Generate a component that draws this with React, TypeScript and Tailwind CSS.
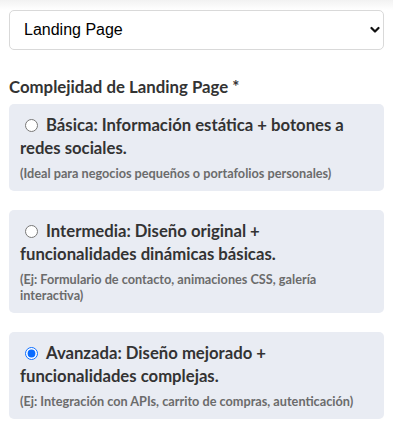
import React, { useState } from 'react';

const options = [
  {
    id: 'basica',
    title: 'Básica: Información estática + botones a redes sociales.',
    note: '(Ideal para negocios pequeños o portafolios personales)',
  },
  {
    id: 'intermedia',
    title: 'Intermedia: Diseño original + funcionalidades dinámicas básicas.',
    note: '(Ej: Formulario de contacto, animaciones CSS, galería interactiva)',
  },
  {
    id: 'avanzada',
    title: 'Avanzada: Diseño mejorado + funcionalidades complejas.',
    note: '(Ej: Integración con APIs, carrito de compras, autenticación)',
  },
];

export default function App() {
  const [level, setLevel] = useState('avanzada');

  return (
    <div className="w-[393px] h-[443px] bg-white overflow-hidden font-['Lato','Noto_Sans',sans-serif] text-[#333]">
      <div className="h-[10px] bg-gradient-to-b from-[#f2f2f2] to-white" />
      <div className="px-[9px]">
        {/* selector de tipo de proyecto */}
        <div className="relative">
          <select
            defaultValue="landing"
            className="w-full h-[40px] appearance-none rounded-[5px] border border-[#d9d9d9] bg-white pl-[14px] pr-8 font-['Liberation_Sans',Arial,sans-serif] text-[16px] text-black outline-none"
          >
            <option value="landing">Landing Page</option>
            <option value="web">Sitio Web</option>
            <option value="tienda">Tienda en línea</option>
          </select>
          <svg
            className="pointer-events-none absolute right-[4px] top-[16px] w-[10px] h-[8px]"
            viewBox="0 0 10 8"
            fill="none"
            stroke="#111"
            strokeWidth="2.2"
            strokeLinecap="round"
            strokeLinejoin="round"
          >
            <path d="M1.5 2 L5 5.5 L8.5 2" />
          </svg>
        </div>

        <div className="mt-[28px] text-[16.8px] font-bold leading-[18px] text-[#333]">
          Complejidad de Landing Page *
        </div>

        <div className="mt-[8px] flex flex-col gap-[19px]">
          {options.map((o) => (
            <label
              key={o.id}
              className="block rounded-[5px] bg-[#e9ecf3] px-[11px] pt-[10px] pb-[10px] cursor-pointer"
            >
              <div className="text-[16.7px] leading-[23px] font-bold text-[#333]">
                <input
                  type="radio"
                  name="complejidad"
                  checked={level === o.id}
                  onChange={() => setLevel(o.id)}
                  className="ml-[5px] mr-[8px] w-[13px] h-[13px] align-[-1px] accent-[#0a6cff]"
                />
                {o.title}
              </div>
              <p className="mt-[5px] text-[12.7px] leading-[16px] font-bold text-[#6b6b6b]">
                {o.note}
              </p>
            </label>
          ))}
        </div>
      </div>
    </div>
  );
}
